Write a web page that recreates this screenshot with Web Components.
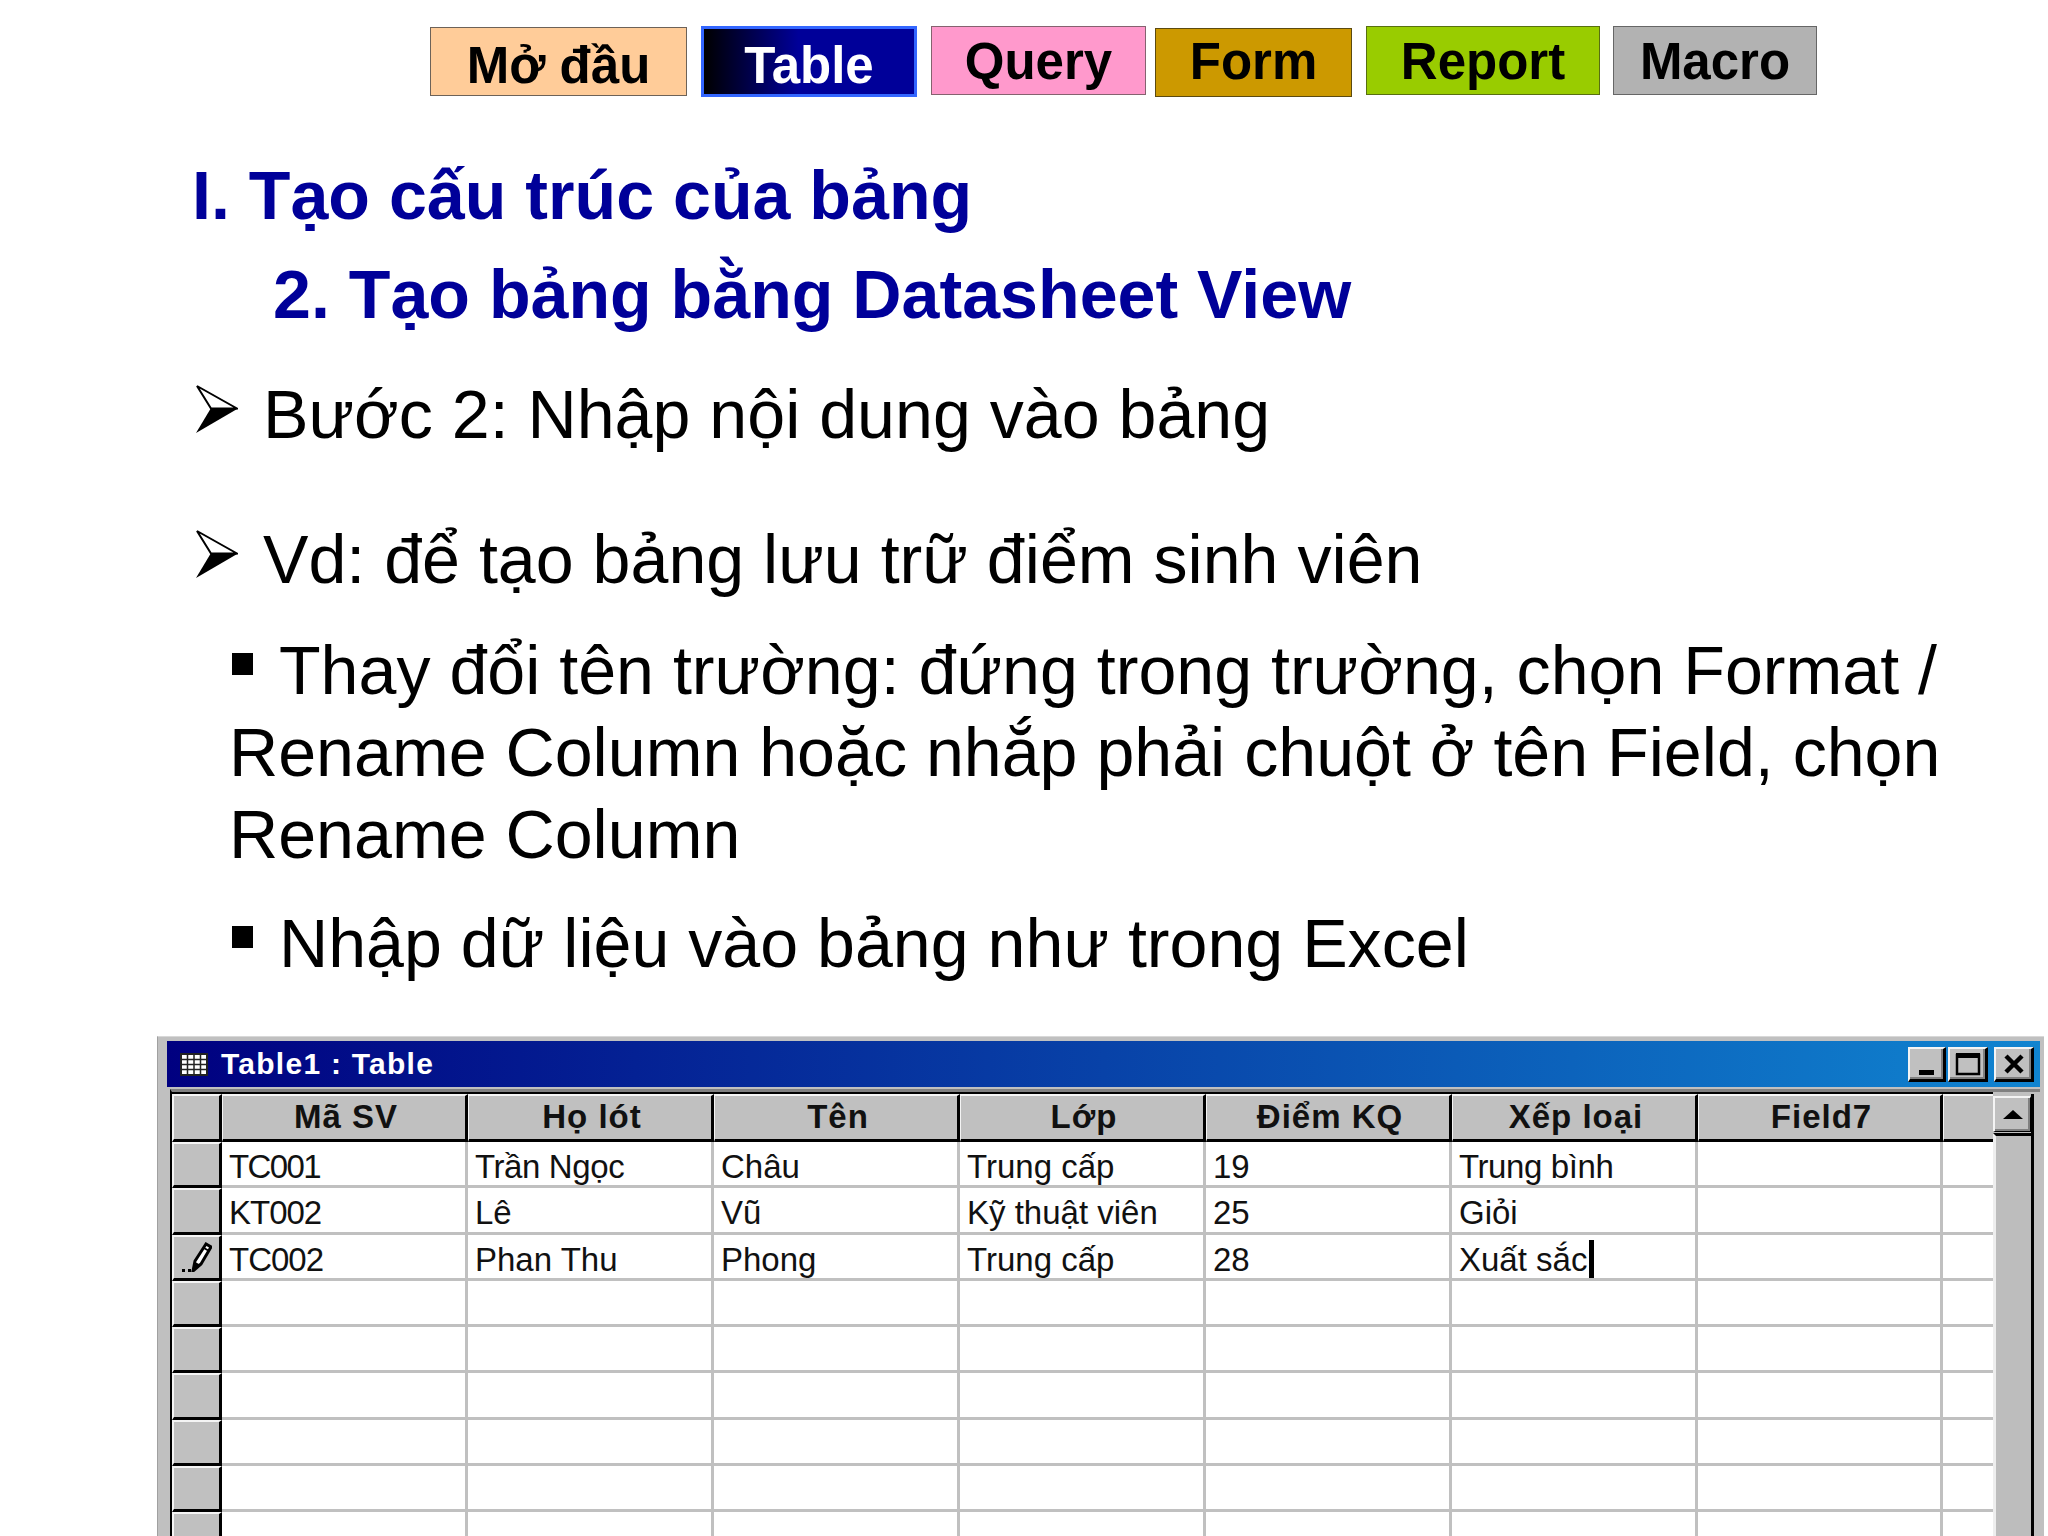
<!DOCTYPE html>
<html lang="vi">
<head>
<meta charset="utf-8">
<title>Table</title>
<style>
  html, body { margin: 0; height: 1536px; overflow: hidden; background: #fff; }
  body { font-family: "Liberation Sans", Arial, sans-serif; }
</style>
</head>
<body>
<slide-page>
  <nav-bar slot="nav">
    <nav-tab label="Mở đầu" style="--w:257px;--h:69px;--mt:27px;--pt:8px;--bg:#ffcc99;--bd:#6d6258"></nav-tab>
    <nav-tab label="Table" style="--w:216px;--h:71px;--mt:26px;--pt:7px;--bg:linear-gradient(90deg,#000 0,#000099 45%);--bd:#3366ff;--bw:3px;--fg:#fff;--ml:14px"></nav-tab>
    <nav-tab label="Query" style="--w:215px;--h:69px;--mt:26px;--pt:5px;--bg:#ff99cc;--bd:#85626f;--ml:14px"></nav-tab>
    <nav-tab label="Form" style="--w:197px;--h:69px;--mt:28px;--pt:3px;--bg:#cc9900;--bd:#5c4a10;--ml:9px"></nav-tab>
    <nav-tab label="Report" style="--w:234px;--h:69px;--mt:26px;--pt:5px;--bg:#99cc00;--bd:#586f10;--ml:14px"></nav-tab>
    <nav-tab label="Macro" style="--w:204px;--h:69px;--mt:26px;--pt:5px;--bg:#b2b2b2;--bd:#666;--ml:13px"></nav-tab>
  </nav-bar>

  <slide-line kind="title" style="--x:192px;--mt:56px">I. Tạo cấu trúc của bảng</slide-line>
  <slide-line kind="title" style="--x:273px;--mt:17px">2. Tạo bảng bằng Datasheet View</slide-line>
  <slide-line kind="arrow" style="--x:196px;--mt:38px;--gap:25px">Bước 2: Nhập nội dung vào bảng</slide-line>
  <slide-line kind="arrow" style="--x:196px;--mt:63px;--gap:25px">Vd: để tạo bảng lưu trữ điểm sinh viên</slide-line>
  <slide-line kind="square" style="--x:232px;--mt:29px;--gap:26px">Thay đổi tên trường: đứng trong trường, chọn Format /</slide-line>
  <slide-line style="--x:229px">Rename Column hoặc nhắp phải chuột ở tên Field, chọn</slide-line>
  <slide-line style="--x:229px">Rename Column</slide-line>
  <slide-line kind="square" style="--x:232px;--mt:27px;--gap:26px">Nhập dữ liệu vào bảng như trong Excel</slide-line>

  <access-window slot="window" caption="Table1 : Table"></access-window>
</slide-page>

<script>
class SlidePage extends HTMLElement {
  constructor() {
    super();
    this.attachShadow({ mode: 'open' });
    this.shadowRoot.innerHTML = `
      <style>
        :host { display: block; width: 2048px; height: 1536px; overflow: hidden; color: #000; }
        .lines { display: block; }
      </style>
      <slot name="nav"></slot>
      <div class="lines"><slot></slot></div>
      <slot name="window"></slot>
    `;
  }
}

class NavBar extends HTMLElement {
  constructor() {
    super();
    this.attachShadow({ mode: 'open' });
    this.shadowRoot.innerHTML = `
      <style>
        :host { display: flex; align-items: flex-start; padding-left: 430px; height: 98px; }
      </style>
      <slot></slot>
    `;
  }
}

class NavTab extends HTMLElement {
  constructor() {
    super();
    this.attachShadow({ mode: 'open' });
  }

  connectedCallback() {
    this.shadowRoot.innerHTML = `
      <style>
        :host {
          display: block;
          box-sizing: border-box;
          flex: none;
          width: var(--w);
          height: var(--h);
          margin: var(--mt) 0 0 var(--ml, 0);
          padding-top: var(--pt);
          background: var(--bg);
          border: var(--bw, 1px) solid var(--bd);
          color: var(--fg, #000);
          font: bold 51px/60px "Liberation Sans", Arial, sans-serif;
          text-align: center;
          white-space: nowrap;
        }
      </style>
      <span></span>
    `;
    this.shadowRoot.querySelector('span').textContent = this.getAttribute('label');
  }
}

const ARROW_BULLET = `
  <svg width="42" height="48" viewBox="0 0 42 48" aria-hidden="true">
    <path d="M1 1 L41 23.500 L15 23.500 Z" fill="#fff" stroke="#000" stroke-width="2" stroke-linejoin="miter"/>
    <path d="M0 48 L15 23 L42 23.500 Z" fill="#000"/>
  </svg>`;

class SlideLine extends HTMLElement {
  constructor() {
    super();
    this.attachShadow({ mode: 'open' });
  }

  connectedCallback() {
    const kind = this.getAttribute('kind') || 'plain';
    let bullet = '';
    if (kind === 'arrow') bullet = `<span class="b arrow">${ARROW_BULLET}</span>`;
    if (kind === 'square') bullet = '<span class="b square"></span>';
    this.shadowRoot.innerHTML = `
      <style>
        :host {
          display: flex;
          align-items: flex-start;
          height: 82px;
          margin-top: var(--mt, 0);
          padding-left: var(--x);
          font: 68.150px/82px "Liberation Sans", Arial, sans-serif;
          white-space: nowrap;
          color: #000;
        }
        :host([kind="title"]) { font-size: 68.170px; font-weight: bold; color: #000099; }
        .b { flex: none; display: block; margin-right: var(--gap); }
        .arrow { width: 42px; height: 48px; margin-top: 12px; }
        .arrow svg { display: block; }
        .square { width: 21px; height: 22px; margin-top: 24px; background: #000; }
      </style>
      ${bullet}<span><slot></slot></span>
    `;
  }
}

class WinButton extends HTMLElement {
  constructor() {
    super();
    this.attachShadow({ mode: 'open' });
    this.shadowRoot.innerHTML = `
      <style>
        :host {
          display: flex;
          align-items: center;
          justify-content: center;
          box-sizing: border-box;
          width: var(--w, 40px);
          height: var(--h, 35px);
          background: #c0c0c0;
          border-style: solid;
          border-width: 2px 3px 3px 2px;
          border-color: #f4f4f4 #000 #000 #f4f4f4;
          box-shadow: inset -2px -2px 0 #808080;
          flex: none;
        }
      </style>
      <slot></slot>
    `;
  }
}

const COLUMNS = ['Mã SV', 'Họ lót', 'Tên', 'Lớp', 'Điểm KQ', 'Xếp loại', 'Field7'];
const ROWS = [
  ['TC001', 'Trần Ngọc', 'Châu', 'Trung cấp', '19', 'Trung bình', ''],
  ['KT002', 'Lê', 'Vũ', 'Kỹ thuật viên', '25', 'Giỏi', ''],
  ['TC002', 'Phan Thu', 'Phong', 'Trung cấp', '28', 'Xuất sắc', '']
];
const BLANK_ROWS = 7;
// the screen font packs the codes tighter than Liberation does
const TIGHT = { TC001: '-1.6px', KT002: '-1px', TC002: '-1px', 'Trần Ngọc': '-0.4px', 'Trung bình': '-0.4px' };

const PENCIL = `
  <svg width="30" height="30" viewBox="0 0 30 30" aria-hidden="true">
    <rect x="0" y="27" width="3" height="3" fill="#000"/>
    <rect x="6" y="27" width="3" height="3" fill="#000"/>
    <path d="M11 29 L13 19 L24 2 L29 5 L19 22 Z" fill="#fff" stroke="#000" stroke-width="3"/>
    <path d="M11 29 L13 20 L19 23 Z" fill="#000"/>
    <path d="M22 6 L27 9" stroke="#000" stroke-width="2"/>
  </svg>`;

class AccessWindow extends HTMLElement {
  constructor() {
    super();
    this.attachShadow({ mode: 'open' });
  }

  connectedCallback() {
    this.render();
  }

  render() {
    this.shadowRoot.innerHTML = `
      <style>
        :host {
          display: block;
          box-sizing: border-box;
          width: 1887px;
          height: 520px;
          margin: 52px 0 0 157px;
          padding: 4px 4px 0 9px;
          background: #c0c0c0;
          border-top: 1px solid #d8d8d8;
          border-left: 1px solid #a0a0a0;
          font-family: "Liberation Sans", Arial, sans-serif;
        }
        .bar {
          display: flex;
          align-items: center;
          box-sizing: border-box;
          height: 46px;
          padding: 0 6px 0 13px;
          background: linear-gradient(90deg, #000080 0, #1084d0 100%);
          color: #fff;
        }
        .bar svg.ico { display: block; flex: none; margin-right: 13px; }
        .cap { flex: 1; font: bold 30px/46px "Liberation Sans", Arial, sans-serif; letter-spacing: 1.250px; white-space: nowrap; }
        win-button.max { margin: 0 6px 0 2px; }
        .inner {
          display: flex;
          margin: 2px 0 0 3px;
          border-top: 3px solid #808080;
          border-left: 2px solid #000;
          padding-top: 2px;
          background: #c0c0c0;
          height: 600px;
        }
        .grid {
          display: grid;
          flex: none;
          width: 1821px;
          grid-template-columns: 50px repeat(6, 246px) 245px 50px;
          grid-template-rows: 48px repeat(10, 46.250px);
          background: #fff;
          border-top: 2px solid #000;
          margin-top: -2px;
        }
        .c, .h, .s, .f {
          box-sizing: border-box;
          font-size: 33px;
          line-height: 40px;
          white-space: nowrap;
          overflow: hidden;
        }
        .c {
          padding: 5px 0 0 7px;
          color: #111;
          border-right: 3px solid #c0c0c0;
          border-bottom: 3px solid #c0c0c0;
        }
        .f { border-bottom: 3px solid #c0c0c0; }
        .h {
          padding: 1px 0 0 4px;
          text-align: center;
          font-weight: bold;
          letter-spacing: 1px;
          color: #111;
          background: #c0c0c0;
          border-top: 2px solid #f4f4f4;
          border-left: 1px solid #f4f4f4;
          border-right: 3px solid #000;
          border-bottom: 3px solid #000;
        }
        .s {
          display: flex;
          align-items: center;
          justify-content: center;
          background: #c0c0c0;
          border-top: 2px solid #f4f4f4;
          border-left: 2px solid #f4f4f4;
          border-right: 3px solid #000;
          border-bottom: 3px solid #000;
        }
        .h.end { border-right: 0; }
        .caret { display: inline-block; width: 5px; height: 40px; margin-left: 2px; vertical-align: top; background: #000; }
        .scroll { flex: none; width: 41px; background: #c0c0c0; border-right: 3px solid #000; box-sizing: border-box; }
        .scroll win-button { --w: 38px; --h: 36px; margin-top: 2px; border-right-width: 1px; border-bottom-width: 1px; box-shadow: inset -2px -2px 0 #808080; }
        .track { height: 600px; margin-top: 1px; border-top: 3px solid #000; border-left: 3px solid #eee; background: #bdbdbd; }
      </style>
      <div class="bar">
        <svg class="ico" width="28" height="23" viewBox="0 0 28 23" aria-hidden="true">
          <rect x="1" y="1" width="26" height="21" fill="#fff" stroke="#222" stroke-width="2"/>
          <path d="M1 6.500H27M1 11.500H27M1 16.500H27M7.500 1V22M14 1V22M20.500 1V22" stroke="#222" stroke-width="1.500" fill="none"/>
        </svg>
        <span class="cap"></span>
        <win-button style="--w:38px">
          <svg width="30" height="28" viewBox="0 0 30 28" aria-hidden="true"><rect x="7" y="20" width="15" height="5" fill="#000"/></svg>
        </win-button>
        <win-button class="max">
          <svg width="26" height="24" viewBox="0 0 26 24" aria-hidden="true"><rect x="2" y="3" width="22" height="19" fill="none" stroke="#000" stroke-width="2.500"/><rect x="1" y="1" width="24" height="5" fill="#000"/></svg>
        </win-button>
        <win-button>
          <svg width="22" height="20" viewBox="0 0 22 20" aria-hidden="true"><path d="M3 2 L19 18 M19 2 L3 18" stroke="#000" stroke-width="4.500"/></svg>
        </win-button>
      </div>
      <div class="inner">
        <div class="grid"></div>
        <div class="scroll">
          <win-button>
            <svg width="20" height="9" viewBox="0 0 20 9" aria-hidden="true"><path d="M10 0 L20 9 H0 Z" fill="#000"/></svg>
          </win-button>
          <div class="track"></div>
        </div>
      </div>
    `;
    this.shadowRoot.querySelector('.cap').textContent = this.getAttribute('caption');

    const grid = this.shadowRoot.querySelector('.grid');
    const add = (cls, text) => {
      const d = document.createElement('div');
      d.className = cls;
      d.textContent = text || '';
      grid.appendChild(d);
      return d;
    };

    // header row
    add('s');
    COLUMNS.forEach(name => add('h', name));
    add('h end');

    // data rows, then the empty ones
    ROWS.forEach((row, r) => {
      const sel = add('s');
      if (r === 2) sel.innerHTML = PENCIL;
      row.forEach(text => {
        const d = add('c', text);
        if (TIGHT[text]) d.style.letterSpacing = TIGHT[text];
        if (text === 'Xuất sắc') {
          const caret = document.createElement('span');
          caret.className = 'caret';
          d.appendChild(caret);
        }
      });
      add('f');
    });
    for (let i = 0; i < BLANK_ROWS; i++) {
      add('s');
      COLUMNS.forEach(() => add('c'));
      add('f');
    }
  }
}

customElements.define('slide-page', SlidePage);
customElements.define('nav-bar', NavBar);
customElements.define('nav-tab', NavTab);
customElements.define('slide-line', SlideLine);
customElements.define('win-button', WinButton);
customElements.define('access-window', AccessWindow);
</script>
</body>
</html>
